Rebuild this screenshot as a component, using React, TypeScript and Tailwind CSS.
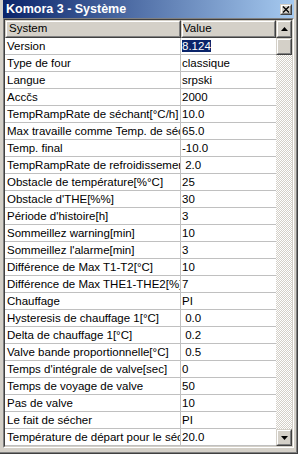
const rows: [string, string][] = [
  ["Version", "8.124"],
  ["Type de four", "classique"],
  ["Langue", "srpski"],
  ["Accčs", "2000"],
  ["TempRampRate de séchant[°C/h]", "10.0"],
  ["Max travaille comme Temp. de séchage", "65.0"],
  ["Temp. final", "-10.0"],
  ["TempRampRate de refroidissement [°C/h]", " 2.0"],
  ["Obstacle de température[%°C]", "25"],
  ["Obstacle d'THE[%%]", "30"],
  ["Période d'histoire[h]", "3"],
  ["Sommeillez warning[min]", "10"],
  ["Sommeillez l'alarme[min]", "3"],
  ["Différence de Max T1-T2[°C]", "10"],
  ["Différence de Max THE1-THE2[%]", "7"],
  ["Chauffage", "PI"],
  ["Hysteresis de chauffage 1[°C]", " 0.0"],
  ["Delta de chauffage 1[°C]", " 0.2"],
  ["Valve bande proportionnelle[°C]", " 0.5"],
  ["Temps d'intégrale de valve[sec]", "0"],
  ["Temps de voyage de valve", "50"],
  ["Pas de valve", "10"],
  ["Le fait de sécher", "PI"],
  ["Température de départ pour le séchage", "20.0"],
];

const Raised = ({ className, children }: { className: string; children?: React.ReactNode }) => (
  <div className={`border border-t-[#d4d0c8] border-l-[#d4d0c8] border-r-[#404040] border-b-[#404040] ${className}`}>
    <div className="w-full h-full border border-t-white border-l-white border-r-[#808080] border-b-[#808080] bg-[#d4d0c8] flex items-center">
      {children}
    </div>
  </div>
);

const Arrow = ({ up }: { up?: boolean }) => (
  <svg width="7" height="4" viewBox="0 0 7 4" className="mx-auto">
    <polygon points={up ? "3.5,0 7,4 0,4" : "0,0 7,0 3.5,4"} fill="#000" />
  </svg>
);

export default function App() {
  return (
    <div className="w-[298px] h-[454px] bg-[#d4d0c8] border-r border-b border-[#404040] font-['Liberation_Sans',Arial,sans-serif] text-[11.5px] text-black overflow-hidden">
      <div className="w-full h-full border-r border-b border-[#808080] pl-[3px] pr-[2px] flex flex-col">
        {/* title bar */}
        <div className="h-[18px] flex items-center justify-between bg-[linear-gradient(to_right,#0a246a,#a6caf0)] pl-[3px] pr-[2px]">
          <span className="text-white font-bold text-[12.5px] leading-none">Komora 3 - Système</span>
          <Raised className="w-[12px] h-[11px]">
            <svg width="8" height="7" viewBox="0 0 8 7" className="mx-auto">
              <path d="M1 0.5 L7 6.5 M7 0.5 L1 6.5" stroke="#000" strokeWidth="1.3" />
            </svg>
          </Raised>
        </div>

        {/* grid */}
        <div className="border-t border-l border-[#808080] border-r border-r-white border-b border-b-white">
          <div className="border-t border-l border-[#404040] border-r border-r-[#d4d0c8] border-b border-b-[#d4d0c8] flex">
            <div className="w-[271px] bg-white">
              <div className="flex h-[18px]">
                <Raised className="w-[176px] h-[18px]">
                  <span className="pl-[2px]">System</span>
                </Raised>
                <Raised className="w-[95px] h-[18px]">
                  <span>Value</span>
                </Raised>
              </div>
              {rows.map(([label, value], i) => (
                <div key={i} className="flex h-[17px] border-b border-[#c0c0c0]">
                  <div className="w-[176px] border-r border-[#c0c0c0] pl-[2px] whitespace-pre overflow-hidden leading-[16px]">
                    {label}
                  </div>
                  <div className="w-[95px] pl-[1px] whitespace-pre overflow-hidden leading-[16px]">
                    {i === 0 ? (
                      <span className="bg-[#0a246a] text-white inline-block leading-[12px]">{value}</span>
                    ) : (
                      value
                    )}
                  </div>
                </div>
              ))}
            </div>

            {/* scrollbar */}
            <div className="w-[16px] flex flex-col bg-[repeating-conic-gradient(#d4d0c8_0_25%,#ffffff_0_50%)] bg-[length:2px_2px]">
              <Raised className="w-[16px] h-[18px]">
                <Arrow up />
              </Raised>
              <Raised className="w-[16px] h-[17px]" />
              <div className="flex-1" />
              <Raised className="w-[16px] h-[17px]">
                <Arrow />
              </Raised>
            </div>
          </div>
        </div>
      </div>
    </div>
  );
}
